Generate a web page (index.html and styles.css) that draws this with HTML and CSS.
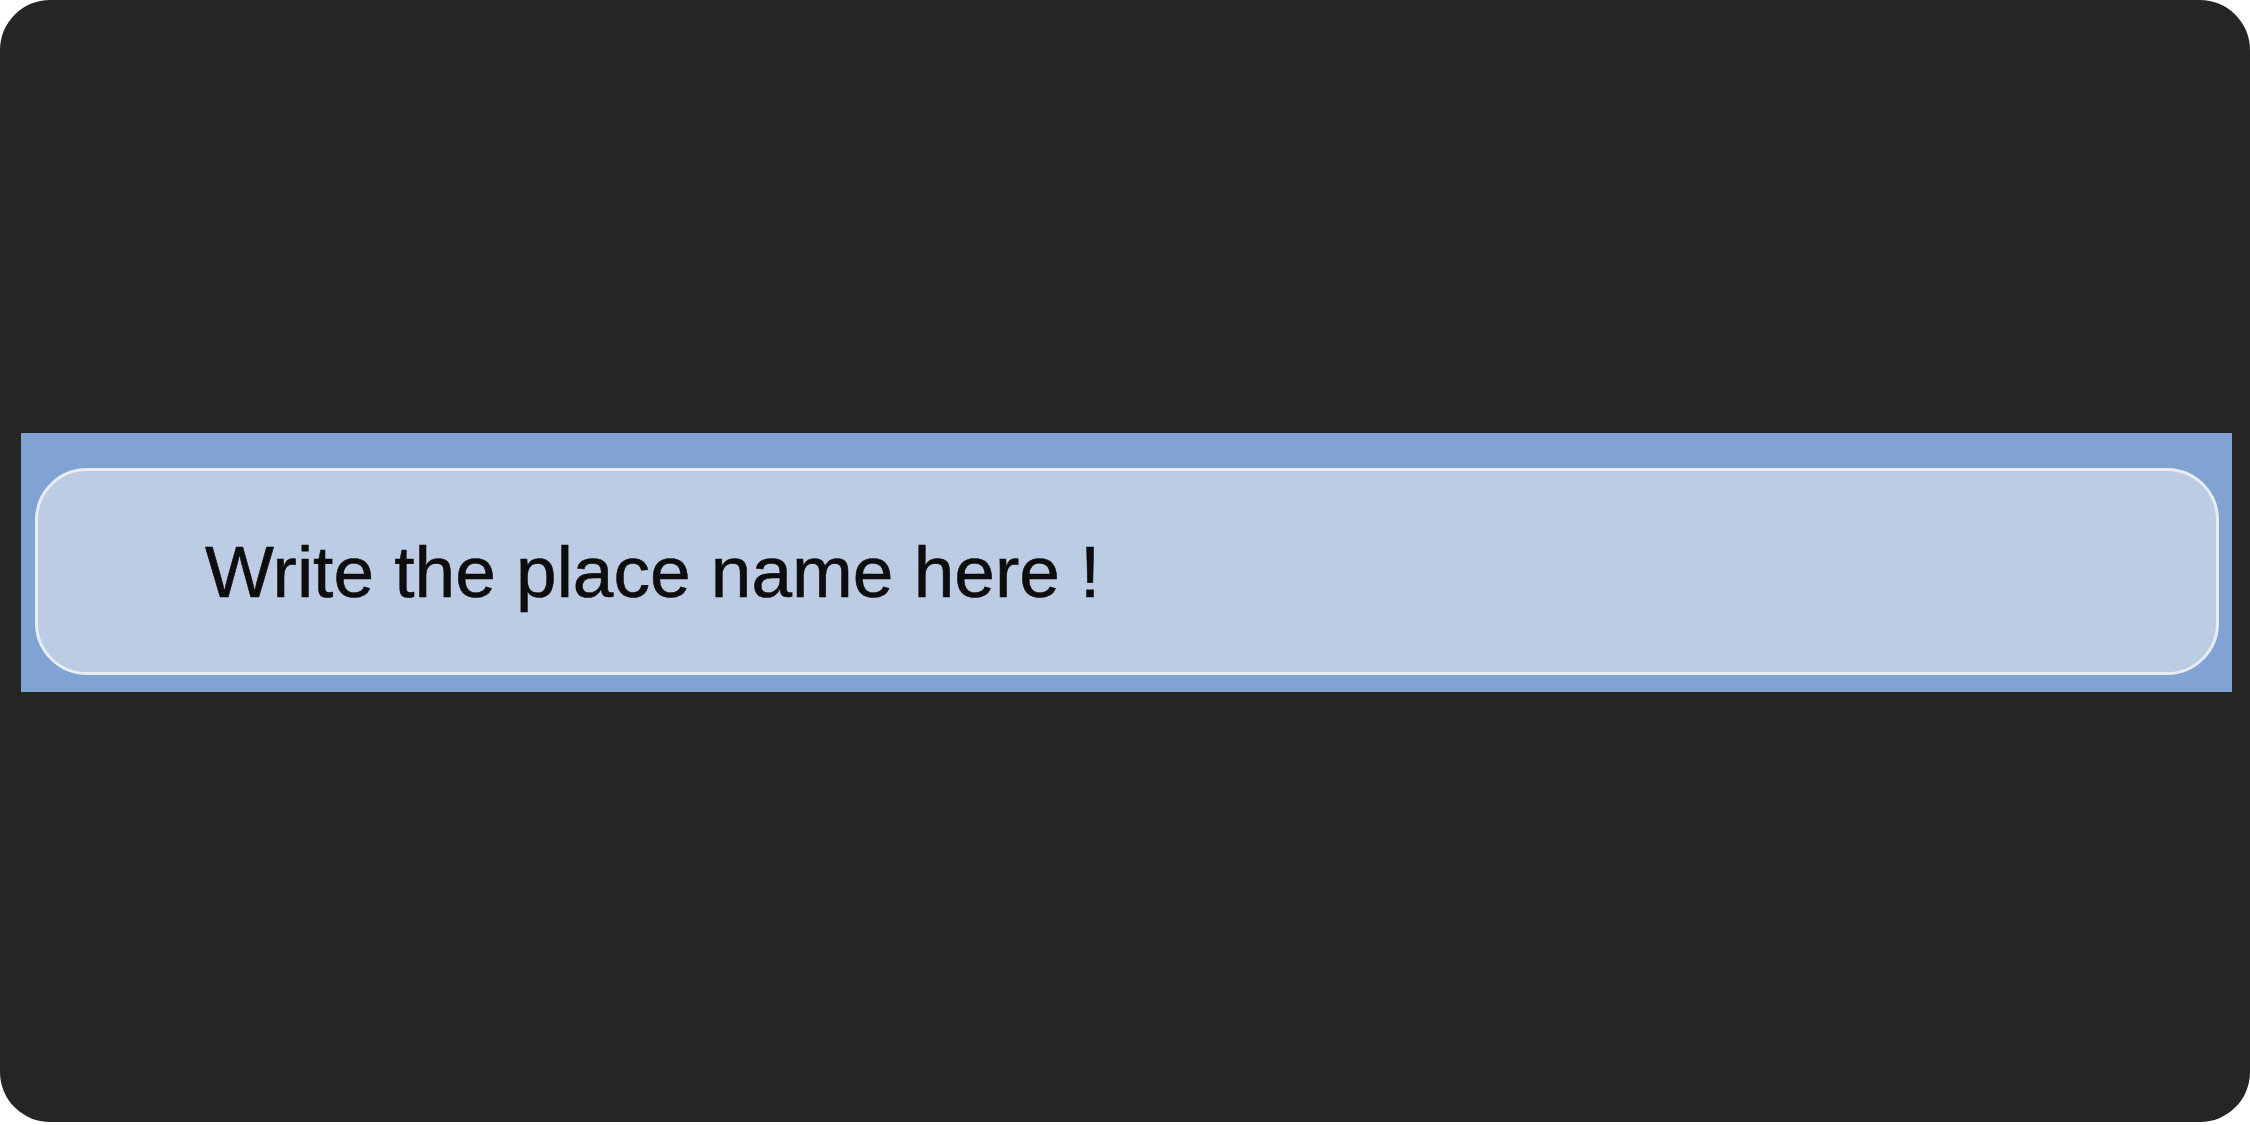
FILE: index.html
```html
<!DOCTYPE html>
<html lang="en">
<head>
<meta charset="utf-8">
<title>Place name</title>
<link rel="stylesheet" href="styles.css">
</head>
<body>
<div class="frame">
  <div class="band">
    <div class="field">Write the place name here !</div>
  </div>
</div>
</body>
</html>
```
FILE: styles.css
```css
html, body {
  margin: 0;
  padding: 0;
  background: #ffffff;
}
.frame {
  box-sizing: border-box;
  width: 2250px;
  height: 1122px;
  border-radius: 50px;
  background: #262524;
  padding: 433px 18px 0 21px;
  display: flex;
  flex-direction: column;
}
.band {
  box-sizing: border-box;
  width: 2211px;
  height: 259px;
  background: #80a3d3;
  padding: 35px 13px 17px 14px;
}
.field {
  box-sizing: border-box;
  height: 207px;
  border: 3px solid #e9edf3;
  border-radius: 52px;
  background: #bccce4;
  display: flex;
  align-items: center;
  padding-left: 167px;
  font-family: "Liberation Sans", Arial, sans-serif;
  font-size: 73px;
  color: #0d0d0d;
  -webkit-text-stroke: 0.6px #0d0d0d;
}
```
